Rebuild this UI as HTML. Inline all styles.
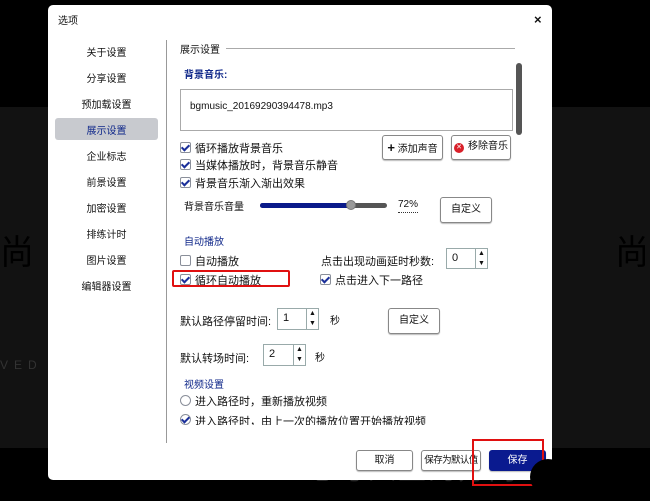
<!DOCTYPE html>
<html><head><meta charset="utf-8"><style>
*{margin:0;padding:0;box-sizing:border-box}
body{width:650px;height:501px;background:#000;position:relative;overflow:hidden;font-family:"Liberation Sans","Noto Sans CJK SC",sans-serif;font-size:10px;color:#111;line-height:1.25}
.a{position:absolute;white-space:nowrap;margin-top:3px}
.side{position:absolute;left:0;width:103px;text-align:center;font-size:10px;margin-top:4px}
.band{position:absolute;left:0;top:107px;width:650px;height:341px;background:#121212}
.dlg{position:absolute;left:48px;top:5px;width:504px;height:475px;background:#fff;border-radius:5px}
.cb{position:absolute;width:11px;height:11px;border:1px solid #8a8f9a;border-radius:2px;background:#fff}
.cb.on::after{content:"";position:absolute;left:2px;top:0px;width:3px;height:6px;border:solid #1a2f9a;border-width:0 2px 2px 0;transform:rotate(45deg)}
.btn{position:absolute;border:1px solid #888;border-radius:3px;background:#fff;text-align:center;font-size:10px;box-shadow:0 1px 1px #bbb;white-space:nowrap}
.blue{color:#10288a;font-weight:bold}
.spin{position:absolute;border:1px solid #9aa;background:#fff;font-size:11px}
.spin .ar{position:absolute;right:0;top:0;width:12px;height:100%;border-left:1px solid #9aa;font-size:7px;line-height:10px;text-align:center}
</style></head><body>
<div class="band"></div>
<div class="a" style="left:308px;top:449px;font-size:28px;color:#2a2a2a;letter-spacing:2px">思考人生的方向</div>
<div class="a" style="left:0;top:229px;font-size:34px;color:#000">尚</div>
<div class="a" style="left:615px;top:229px;font-size:34px;color:#000">尚</div>
<div class="a" style="left:0;top:355px;font-size:12px;color:#333;letter-spacing:6px">VED</div>
<div class="dlg">
<div class="a" style="left:10px;top:8px;font-size:10px">选项</div>
<div class="a" style="left:486px;top:4px;font-size:13px;font-weight:bold">×</div>
<div style="position:absolute;left:7px;top:0;width:103px">
<div class="side" style="top:39px">关于设置</div>
<div class="side" style="top:65px">分享设置</div>
<div class="side" style="top:91px">预加载设置</div>
<div style="position:absolute;left:0;top:113px;width:103px;height:22px;background:#c8cacf;border-radius:3px"></div>
<div class="side blue" style="top:117px;font-weight:normal">展示设置</div>
<div class="side" style="top:143px">企业标志</div>
<div class="side" style="top:169px">前景设置</div>
<div class="side" style="top:195px">加密设置</div>
<div class="side" style="top:221px">排练计时</div>
<div class="side" style="top:247px">图片设置</div>
<div class="side" style="top:273px">编辑器设置</div>
</div>
<div style="position:absolute;left:118px;top:35px;width:1px;height:403px;background:#999"></div>
<div class="a" style="left:132px;top:37px">展示设置</div>
<div style="position:absolute;left:178px;top:43px;width:289px;height:1px;background:#aaa"></div>
<div style="position:absolute;left:468px;top:58px;width:6px;height:72px;background:#555;border-radius:3px"></div>
<div class="a blue" style="left:136px;top:62px">背景音乐:</div>
<div style="position:absolute;left:132px;top:84px;width:333px;height:42px;border:1px solid #aaa"></div>
<div class="a" style="left:142px;top:93px">bgmusic_20169290394478.mp3</div>
<div class="cb on" style="left:132px;top:137px"></div><div class="a" style="left:147px;top:135px;font-size:11px">循环播放背景音乐</div>
<div class="cb on" style="left:132px;top:154px"></div><div class="a" style="left:147px;top:152px;font-size:11px">当媒体播放时，背景音乐静音</div>
<div class="cb on" style="left:132px;top:172px"></div><div class="a" style="left:147px;top:170px;font-size:11px">背景音乐渐入渐出效果</div>
<div class="btn" style="left:334px;top:130px;width:61px;height:25px;line-height:23px"><b style="font-size:13px">+</b> 添加声音</div>
<div class="btn" style="left:403px;top:130px;width:60px;height:25px;display:flex;align-items:center;justify-content:center;gap:4px"><span style="display:inline-block;width:10px;height:10px;border-radius:50%;background:#d9202a;color:#fff;font-size:7px;line-height:10px;text-align:center">✕</span><span>移除音乐</span></div>
<div class="a" style="left:136px;top:194px">背景音乐音量</div>
<div style="position:absolute;left:212px;top:198px;width:127px;height:5px;background:#555;border-radius:3px"></div>
<div style="position:absolute;left:212px;top:198px;width:92px;height:5px;background:#0a1a8a;border-radius:3px"></div>
<div style="position:absolute;left:298px;top:195px;width:10px;height:10px;border-radius:50%;background:#999;border:1px solid #777"></div>
<div class="a" style="left:350px;top:191px;border-bottom:1px dotted #333">72%</div>
<div class="btn" style="left:392px;top:192px;width:52px;height:26px;line-height:24px">自定义</div>
<div class="a blue" style="left:136px;top:229px;font-weight:normal">自动播放</div>
<div class="cb" style="left:132px;top:250px"></div><div class="a" style="left:147px;top:248px;font-size:11px">自动播放</div>
<div class="cb on" style="left:132px;top:269px"></div><div class="a" style="left:147px;top:267px;font-size:11px">循环自动播放</div>
<div style="position:absolute;left:124px;top:265px;width:118px;height:17px;border:2px solid #e01010;border-radius:2px"></div>
<div class="a" style="left:273px;top:248px;font-size:11px">点击出现动画延时秒数:</div>
<div class="spin" style="left:398px;top:243px;width:42px;height:21px"><span style="position:absolute;left:5px;top:3px">0</span><div class="ar">▲<br>▼</div></div>
<div class="cb on" style="left:272px;top:269px"></div><div class="a" style="left:287px;top:267px;font-size:11px">点击进入下一路径</div>
<div class="a" style="left:132px;top:308px;font-size:11px">默认路径停留时间:</div>
<div class="spin" style="left:229px;top:303px;width:42px;height:22px"><span style="position:absolute;left:5px;top:3px">1</span><div class="ar">▲<br>▼</div></div>
<div class="a" style="left:282px;top:308px">秒</div>
<div class="btn" style="left:340px;top:303px;width:52px;height:26px;line-height:24px">自定义</div>
<div class="a" style="left:132px;top:345px;font-size:11px">默认转场时间:</div>
<div class="spin" style="left:215px;top:339px;width:43px;height:22px"><span style="position:absolute;left:5px;top:3px">2</span><div class="ar">▲<br>▼</div></div>
<div class="a" style="left:267px;top:345px">秒</div>
<div class="a blue" style="left:136px;top:372px;font-weight:normal">视频设置</div>
<div style="position:absolute;left:132px;top:390px;width:11px;height:11px;border:1px solid #8a8f9a;border-radius:50%"></div>
<div class="a" style="left:147px;top:388px;font-size:11px">进入路径时，重新播放视频</div>
<div style="position:absolute;left:124px;top:405px;width:380px;height:15px;overflow:hidden">
<div class="cb on" style="left:8px;top:4px;border-radius:50%"></div>
<div class="a" style="left:23px;top:3px;font-size:11px">进入路径时，由上一次的播放位置开始播放视频</div></div>
<div class="btn" style="left:308px;top:445px;width:57px;height:21px;line-height:19px">取消</div>
<div class="btn" style="left:373px;top:445px;width:60px;height:21px;line-height:19px;letter-spacing:-0.6px;font-size:9.5px">保存为默认值</div>
<div class="btn" style="left:441px;top:445px;width:57px;height:21px;line-height:19px;background:#0a1a8f;color:#fff;border-color:#0a1a8f">保存</div>
</div>
<div style="position:absolute;left:472px;top:439px;width:72px;height:47px;border:2px solid #e01010"></div>
<div style="position:absolute;left:530px;top:459px;width:36px;height:36px;border-radius:50%;background:#000"></div>
</body></html>
